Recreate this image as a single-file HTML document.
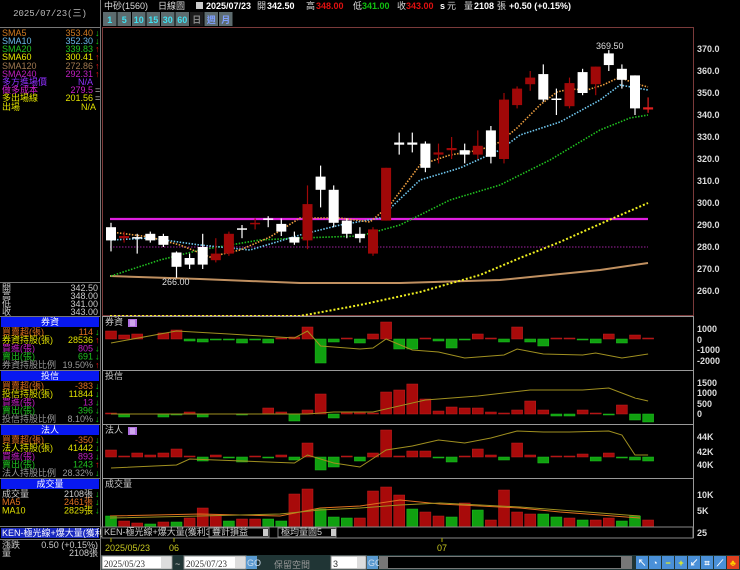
<!DOCTYPE html>
<html><head><meta charset="utf-8">
<style>
html,body{margin:0;padding:0;background:#000;width:740px;height:570px;overflow:hidden}
svg{display:block}
text{font-family:"Liberation Sans","WenQuanYi Zen Hei","Noto Sans CJK TC",sans-serif;font-size:9px}
.m{font-family:"Liberation Mono","WenQuanYi Zen Hei",monospace}
</style></head><body>
<svg id="s" width="740" height="570" viewBox="0 0 740 570" xmlns="http://www.w3.org/2000/svg">
<rect width="740" height="570" fill="#000"/>
<!-- left panel -->
<line x1="100.5" y1="0" x2="100.5" y2="570" stroke="#777"/>
<text x="50" y="16" fill="#bbb" text-anchor="middle" class="m" font-size="8">2025/07/23(三)</text>
<line x1="0" y1="27.5" x2="100" y2="27.5" stroke="#777"/>
<g class="m" font-size="8">
<text x="2" y="36" fill="#d07a20">SMA5</text><text x="93" y="36" fill="#d07a20" text-anchor="end">353.40</text><text x="95" y="36" fill="#1c1">↓</text>
<text x="2" y="44" fill="#6ab8e8">SMA10</text><text x="93" y="44" fill="#6ab8e8" text-anchor="end">352.30</text><text x="95" y="44" fill="#1c1">↓</text>
<text x="2" y="52" fill="#20c020">SMA20</text><text x="93" y="52" fill="#20c020" text-anchor="end">339.83</text><text x="95" y="52" fill="#e11">↑</text>
<text x="2" y="60" fill="#e8e800">SMA60</text><text x="93" y="60" fill="#e8e800" text-anchor="end">300.41</text><text x="95" y="60" fill="#e11">↑</text>
<text x="2" y="69" fill="#a07850">SMA120</text><text x="93" y="69" fill="#a07850" text-anchor="end">272.86</text><text x="95" y="69" fill="#e11">↑</text>
<text x="2" y="77" fill="#c020c0">SMA240</text><text x="93" y="77" fill="#c020c0" text-anchor="end">292.31</text><text x="95" y="77" fill="#e11">↑</text>
<text x="2" y="85" fill="#9030ff">多方進場價</text><text x="93" y="85" fill="#9030ff" text-anchor="end">N/A</text>
<text x="2" y="93" fill="#d020d0">做多成本</text><text x="93" y="93" fill="#d020d0" text-anchor="end">279.5</text><text x="95" y="93" fill="#ccc">=</text>
<text x="2" y="101" fill="#e0e000">多出場線</text><text x="93" y="101" fill="#e0e000" text-anchor="end">201.56</text><text x="95" y="101" fill="#ccc">=</text>
<text x="2" y="110" fill="#e0e000">出場</text><text x="96" y="110" fill="#e0e000" text-anchor="end">N/A</text>
</g>
<line x1="0" y1="282.5" x2="100" y2="282.5" stroke="#777"/>
<g class="m" font-size="8" fill="#ccc">
<text x="2" y="291">開</text><text x="98" y="291" text-anchor="end">342.50</text>
<text x="2" y="299">高</text><text x="98" y="299" text-anchor="end">348.00</text>
<text x="2" y="307">低</text><text x="98" y="307" text-anchor="end">341.00</text>
<text x="2" y="315">收</text><text x="98" y="315" text-anchor="end">343.00</text>
</g>
<g id="lp" class="m" font-size="8"></g>
<!-- top bar -->
<g font-weight="bold">
<text x="104" y="9" fill="#ddd" font-weight="normal" font-size="8">中砂(1560)</text>
<text x="158" y="9" fill="#ddd" font-weight="normal" font-size="8">日線圖</text>
<rect x="196" y="2" width="7" height="7" fill="#ccc"/>
<text x="206" y="9" fill="#fff" font-size="10">2025/07/23</text>
<text x="257" y="9" fill="#ddd" font-weight="normal" font-size="8">開</text><text x="267" y="9" fill="#fff" font-size="10">342.50</text>
<text x="306" y="9" fill="#ddd" font-weight="normal" font-size="8">高</text><text x="316" y="9" fill="#e01010" font-size="10">348.00</text>
<text x="353" y="9" fill="#ddd" font-weight="normal" font-size="8">低</text><text x="362" y="9" fill="#10c010" font-size="10">341.00</text>
<text x="397" y="9" fill="#ddd" font-weight="normal" font-size="8">收</text><text x="406" y="9" fill="#e01010" font-size="10">343.00</text>
<text x="440" y="9" fill="#fff" font-size="9">s</text><text x="447" y="9" fill="#ddd" font-weight="normal" font-size="8">元</text>
<text x="464" y="9" fill="#ddd" font-weight="normal" font-size="8">量</text><text x="474" y="9" fill="#fff" font-size="10">2108</text>
<text x="497" y="9" fill="#ddd" font-weight="normal" font-size="8">張</text>
<text x="509" y="9" fill="#fff" font-size="10">+0.50 (+0.15%)</text>
</g>
<g id="btn"></g>
<!-- chart frames -->
<rect x="102.5" y="27.5" width="591" height="288" fill="none" stroke="#7a3a3a"/>
<g id="g"></g>
</svg>
<script>
var NS="http://www.w3.org/2000/svg",G=document.getElementById('g');
function el(t,a,p,txt){var e=document.createElementNS(NS,t);for(var k in a)e.setAttribute(k,a[k]);if(txt!=null)e.textContent=txt;(p||G).appendChild(e);return e;}
// buttons
var B=document.getElementById('btn');var bl=["1","5","10","15","30","60","日","週","月"];var bx=103;
bl.forEach(function(b,i){var w=14.5;var sel=i==6;el('rect',{x:bx,y:12,width:w-1,height:14,fill:sel?'#1c1c1c':'#5d6b6e'},B);
el('text',{x:bx+(w-1)/2,y:23,fill:i<6?'#40e0f0':(sel?'#888':'#80a0ff'),'text-anchor':'middle','font-size':i<6?'10':'7','font-weight':'bold'},B,b);bx+=w;});
// price
function py(p){return 49+(370-p)*2.2;}
function X(i){return 111+13.1*i;}
// axis labels
[370,360,350,340,330,320,310,300,290,280,270,260].forEach(function(p){el('text',{x:697,y:py(p)+3,fill:'#ddd','font-weight':'bold','font-size':'8'},G,p.toFixed(1));});
// horizontal lines
el('line',{x1:110,y1:219,x2:648,y2:219,stroke:'#e020e0','stroke-width':2.2});
el('line',{x1:110,y1:247,x2:648,y2:247,stroke:'#a020a0','stroke-dasharray':'1.5 1.5','stroke-width':1});
function pl(pts,c,d,w){el('polyline',{points:pts.map(function(q){return q[0]+','+q[1]}).join(' '),fill:'none',stroke:c,'stroke-width':w||1.6,'stroke-dasharray':d||''});}
pl([[110,276],[200,279],[300,283],[400,283],[500,280],[600,270],[648,263]],'#c09060',null,2);
pl([[110,316],[300,316],[360,305],[420,292],[480,275],[520,258],[560,242],[600,224],[648,203]],'#f0f020','2 2',2);
pl([[111,276],[160,260],[200,250],[260,240],[300,238],[360,236],[400,225],[450,200],[500,185],[550,160],[600,130],[630,118],[648,115]],'#20c020','1.5 1.5');
pl([[111,240],[150,238],[200,245],[250,250],[300,235],[340,225],[380,218],[420,180],[460,168],[500,150],[520,135],[560,122],[600,100],[620,85],[648,90]],'#70c8f0','1.5 1.5');
pl([[111,232],[150,237],[180,245],[210,257],[240,250],[270,237],[300,218],[340,218],[370,222],[390,205],[420,165],[450,155],[480,150],[500,142],[517,128],[540,105],[557,92],[570,89],[587,90],[603,85],[620,77],[633,83],[648,87]],'#f0a040','1.5 1.5');
var C=[[289,283,291,278,'w'],[285,284,287,282,'r'],[284.5,284,286,277,'w'],[286,283,287,282,'w'],[285,281,286,280,'w'],[277.5,271,278,266,'w'],[275,272,277,270,'w'],[280,272,286,270,'w'],[277,274,284,273,'r'],[286,277,287,276,'r'],[288.5,288,290,284,'w'],[291,290.5,293,288,'r'],[293,292.5,294,289,'w'],[290.5,287,293,285,'w'],[284.5,282,287,281,'w'],[299.5,283,308,279,'r'],[312,306,317,298,'w'],[306,291,308,289,'w'],[292,286,293,284,'w'],[286,284,289,282,'w'],[288,277,289,276,'r'],[316,292,316,292,'r'],[327.5,326.5,332,322,'w'],[327.5,326.5,332,323,'w'],[327,316,328,314,'w'],[323,322,327,318,'r'],[325,324,330,320,'r'],[324,322,327,318,'w'],[326,322,333,320,'r'],[333,321,335,318,'w'],[347,320,350,318,'r'],[352,344.5,353,343,'r'],[357,354,360,351,'r'],[358.6,347,363,346,'w'],[347.5,347,352,340,'w'],[354.5,344,357,343,'r'],[359.5,350,361,349,'w'],[362,354,362,349,'r'],[368,362.7,369.5,360,'w'],[361,356,363,352,'w'],[358,343,358,340,'w'],[343.5,342.5,348,341,'r']];
C.forEach(function(c,i){var x=X(i),col=c[4]=='w'?'#fff':(i==41?'#e02020':'#a00808');
el('line',{x1:x,y1:py(c[2]),x2:x,y2:py(c[3]),stroke:col,'stroke-width':1.2});
var t=py(c[0]),b=py(c[1]);el('rect',{x:x-5,y:t,width:10,height:Math.max(1.5,b-t),fill:col});});
el('text',{x:596,y:49,fill:'#ddd','font-size':'9'},G,'369.50');
el('text',{x:162,y:285,fill:'#ddd','font-size':'9'},G,'266.00');
// sub panels
function panel(y0,y1,name,zero,bars,line,labels,icon){
el('rect',{x:102.5,y:y0+.5,width:591,height:y1-y0,fill:'none',stroke:'#999'});
el('text',{x:105,y:y0+9,fill:'#ccc','font-size':'7'},G,name);
if(icon){el('rect',{x:128,y:y0+3,width:9,height:8,fill:'#b070e0'});el('path',{d:'M130 '+(y0+5)+'h5M130 '+(y0+7)+'h5M130 '+(y0+9)+'h5',stroke:'#fff','stroke-width':.8});}
bars.forEach(function(v,i){if(v==0)return;var x=X(i);var up=v>0;el('rect',{x:x-5.5,y:up?zero-v:zero,width:11,height:Math.abs(v),fill:up?'#a80a0a':'#10a010',stroke:up?'#c02020':'#20c020','stroke-width':.5});});
if(line)pl(line.map(function(q){return [X(q[0]),q[1]]}),'#a09020',null,1);
labels.forEach(function(l){el('text',{x:697,y:l[1]+3,fill:'#ddd','font-weight':'bold','font-size':'8'},G,l[0]);});
}
panel(316,370,'券資',339,[8,4,5,0,6,9,-2,-3,-1,-1,-4,-1,-4,1,2,12,-24,-3,1,-4,5,17,-10,-10,1,-2,-9,-1,5,1,-3,12,-3,-7,1,1,-1,-4,5,-4,4,1],
[[0,343],[5,331],[9,334],[14,338],[15,331],[16,346],[19,349],[20,348],[21,339],[23,350],[25,352],[27,358],[30,355],[31,349],[33,354],[36,355],[37,353],[39,358],[41,354]],[['1000',329],['0',340],['-1000',350],['-2000',361]],1);
panel(370,424,'投信',414,[1,-3,0,0,-3,-1,2,-3,0,0,-1,0,6,2,-7,4,20,-4,2,2,1,22,24,30,15,3,7,6,6,2,1,4,13,4,-2,-2,4,1,-1,9,-6,-8,-9].slice(0,42),
[[0,414],[15,414],[17,412],[20,412],[24,400],[28,396],[32,390],[36,390],[38,388],[40,398],[41,401]],[['1500',383],['1000',393],['500',404],['0',414]],0);
panel(424,478,'法人',457,[7,1,4,2,4,8,1,-4,2,-1,-5,1,-1,2,-3,14,-13,-10,1,-4,4,27,1,6,6,-1,-5,1,8,2,-3,14,2,-6,1,1,3,-4,4,-1,-3,-4],
[[0,468],[5,465],[6,459],[10,461],[14,463],[15,455],[17,463],[19,467],[21,450],[23,446],[25,440],[27,443],[29,438],[31,431],[33,432],[35,432],[38,431],[39,435],[40,455],[41,455]],[['44K',437],['42K',452],['40K',465]],1);
// volume
el('rect',{x:102.5,y:478.5,width:591,height:59,fill:'none',stroke:'#999'});
el('text',{x:105,y:487,fill:'#ccc','font-size':'7'},G,'成交量');
var V=[11,-6,-4,3,-5,5,-9,-19,-12,6,-8,-8,8,6,-33,-38,18,10,9,-9,-36,-40,-32,18,-15,-11,10,-24,17,-7,-37,-15,-13,13,10,-9,7,-7,-9,6,11,-7];
V.forEach(function(v,i){var x=X(i),h=Math.abs(v),g=v>0;el('rect',{x:x-5.5,y:527-h,width:11,height:h,fill:g?'#10a010':'#a80a0a',stroke:g?'#20c020':'#c02020','stroke-width':.5});});
pl([[110,516],[200,514],[280,516],[320,508],[360,506],[400,500],[440,504],[480,506],[520,508],[560,512],[600,515],[640,518]].map(function(q){return q}),'#e07020',null,1);
pl([[110,518],[200,516],[280,514],[320,510],[360,508],[400,505],[440,503],[480,505],[520,507],[560,510],[600,513],[640,516]],'#a09020',null,1);
[['10K',495],['5K',511],['25',533]].forEach(function(l){el('text',{x:697,y:l[1]+3,fill:'#ddd','font-weight':'bold','font-size':'8'},G,l[0]);});
el('rect',{x:102,y:527,width:591,height:11,fill:'#000',stroke:'#888'});
el('text',{x:104,y:535,fill:'#ccc','font-size':'7'},G,'KEN-極光線+爆大量(獲利3UP)');
el('rect',{x:209,y:528,width:60,height:9,fill:'#000',stroke:'#888'});el('text',{x:212,y:535,fill:'#ccc','font-size':'6'},G,'疊計損益');el('rect',{x:263,y:529,width:5,height:7,fill:'#ccc'});
el('rect',{x:278,y:528,width:58,height:9,fill:'#000',stroke:'#888'});el('text',{x:281,y:535,fill:'#ccc','font-size':'6'},G,'極均量圖5');el('rect',{x:331,y:529,width:5,height:7,fill:'#ccc'});
// date axis
el('line',{x1:111,y1:538,x2:111,y2:542,stroke:'#aa0'});el('line',{x1:174,y1:538,x2:174,y2:542,stroke:'#aa0'});el('line',{x1:442,y1:538,x2:442,y2:542,stroke:'#aa0'});
el('text',{x:105,y:551,fill:'#c8c820','font-size':'9'},G,'2025/05/23');
el('text',{x:169,y:551,fill:'#c8c820','font-size':'9'},G,'06');
el('text',{x:437,y:551,fill:'#c8c820','font-size':'9'},G,'07');
// bottom controls
el('rect',{x:101,y:555,width:639,height:15,fill:'#203535'});
el('rect',{x:102,y:556,width:70,height:13,fill:'#fff',stroke:'#888'});el('text',{x:104,y:567,fill:'#333','font-size':'11',style:'font-family:Liberation Serif'},G,'2025/05/23');
el('rect',{x:161,y:557,width:10,height:11,fill:'#ddd'});
el('text',{x:175,y:567,fill:'#ccc','font-size':'10'},G,'~');
el('rect',{x:184,y:556,width:62,height:13,fill:'#fff',stroke:'#888'});el('text',{x:186,y:567,fill:'#333','font-size':'11',style:'font-family:Liberation Serif'},G,'2025/07/23');
el('rect',{x:235,y:557,width:10,height:11,fill:'#ddd'});
el('rect',{x:246,y:556,width:11,height:13,fill:'#5a9ad0'});el('text',{x:247,y:566,fill:'#cde','font-size':'7'},G,'GO');
el('text',{x:274,y:568,fill:'#999','font-size':'13'},G,'保留空間');
el('rect',{x:331,y:556,width:35,height:13,fill:'#fff',stroke:'#888'});el('text',{x:333,y:567,fill:'#333','font-size':'11'},G,'3');
el('rect',{x:357,y:557,width:8,height:11,fill:'#ddd'});
el('rect',{x:367,y:556,width:11,height:13,fill:'#5a9ad0'});el('text',{x:368,y:566,fill:'#cde','font-size':'7'},G,'GO');
el('rect',{x:379,y:556,width:253,height:13,fill:'#777'});el('rect',{x:388,y:557,width:233,height:11,fill:'#000'});
var ic=['↖','◔','−','+','↙','⌗','⟋','♣'];
ic.forEach(function(t,i){var x=636+i*13;el('rect',{x:x,y:556,width:12,height:13,fill:i==7?'#e04020':'#4a90d8'});el('text',{x:x+6,y:566,fill:i==2||i==3?'#ff0':(i==7?'#fc0':'#fff'),'text-anchor':'middle','font-size':'10','font-weight':'bold'},G,t);});
// left lower panels
var L=document.getElementById('lp');
function sec(y,title,rows){el('line',{x1:0,y1:y-.5,x2:100,y2:y-.5,stroke:'#777'},L);el('rect',{x:1,y:y,width:98,height:10,fill:'#0818f0'},L);el('text',{x:50,y:y+8,fill:'#fff','text-anchor':'middle'},L,title);
rows.forEach(function(r,i){var yy=y+18+i*8.2;el('text',{x:2,y:yy,fill:r[1]},L,r[0]);el('text',{x:93,y:yy,fill:r[3]||r[1],'text-anchor':'end'},L,r[2]);if(r[4])el('text',{x:95,y:yy,fill:r[4]=='u'?'#e11':'#1c1'},L,r[4]=='u'?'↑':'↓');});}
sec(317,'券資',[['買賣超(張)','#e07020','114',0,'d'],['券資持股(張)','#e0e000','28536',0,'u'],['買進(張)','#c020c0','805',0,'d'],['賣出(張)','#20c020','691',0,'d'],['券資持股比例','#999','19.50%',0,'u']]);
sec(371,'投信',[['買賣超(張)','#e07020','-383',0,'d'],['投信持股(張)','#e0e000','11844',0,'d'],['買進(張)','#c020c0','13',0,'d'],['賣出(張)','#20c020','396',0,'d'],['投信持股比例','#999','8.10%',0,'d']]);
sec(425,'法人',[['買賣超(張)','#e07020','-350',0,'d'],['法人持股(張)','#e0e000','41442',0,'d'],['買進(張)','#c020c0','893',0,'d'],['賣出(張)','#20c020','1243',0,'u'],['法人持股比例','#999','28.32%',0,'d']]);
sec(479,'成交量',[['成交量','#ccc','2108張',0,'d'],['MA5','#e07020','2461張',0,'d'],['MA10','#e0e000','2829張',0,'d']]);
el('line',{x1:0,y1:526.5,x2:100,y2:526.5,stroke:'#777'},L);
el('rect',{x:1,y:528,width:98,height:10,fill:'#1828c0'},L);el('text',{x:2,y:536,fill:'#fff','font-size':'7'},L,'KEN-極光線+爆大量(獲利3UP)');
el('line',{x1:0,y1:539.5,x2:100,y2:539.5,stroke:'#777'},L);
el('text',{x:2,y:548,fill:'#ccc'},L,'漲跌');el('text',{x:98,y:548,fill:'#ccc','text-anchor':'end'},L,'0.50 (+0.15%)');
el('text',{x:2,y:556,fill:'#ccc'},L,'量');el('text',{x:98,y:556,fill:'#ccc','text-anchor':'end'},L,'2108張');
</script>
</body></html>
